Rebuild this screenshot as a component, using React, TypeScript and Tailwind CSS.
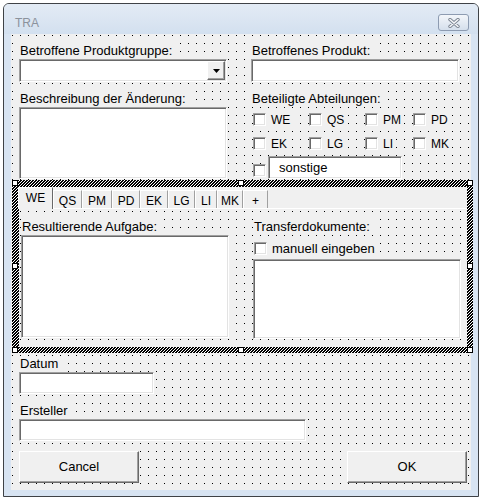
import React from 'react';

// recessed 3D edge used by text boxes, combo boxes and check boxes
const sunken =
  'bg-white border border-t-[#a0a0a0] border-l-[#a0a0a0] border-r-white border-b-white shadow-[inset_1px_1px_0_#696969,inset_-1px_-1px_0_#e3e3e3]';

// raised 3D edge used by buttons
const raised =
  'bg-[#f0f0f0] border border-t-white border-l-white border-r-[#696969] border-b-[#696969] shadow-[inset_-1px_-1px_0_#a0a0a0]';

// designer grid: 1px black dot every 8px
const dotGrid =
  'bg-[#f0f0f0] bg-[conic-gradient(at_1px_1px,transparent_270deg,#000_270deg)] bg-[length:8px_8px]';

const Label = ({ children, className = '' }: { children: React.ReactNode; className?: string }) => (
  <div className={`h-[16px] w-fit bg-[#f0f0f0] pl-[1px] pr-[3px] whitespace-nowrap ${className}`}>{children}</div>
);

const Box = ({ className = '' }: { className?: string }) => (
  <div className={`${sunken} w-[13px] h-[13px] shrink-0 ${className}`} />
);

const Check = ({ label, className = '' }: { label: string; className?: string }) => (
  <div className={`w-fit flex items-start h-[13px] bg-[#f0f0f0] ${className}`}>
    <Box />
    <span className="ml-[5px] mt-[1px] text-[12px] leading-[13px] pr-[3px]">{label}</span>
  </div>
);

const ComboBox = () => (
  <div className={`${sunken} h-[23px] flex justify-end items-start p-[1px]`}>
    <div className={`${raised} w-[18px] h-[19px] flex items-center justify-center`}>
      <svg width="7" height="4" viewBox="0 0 7 4">
        <path d="M0 0h7L3.5 4z" fill="#000" />
      </svg>
    </div>
  </div>
);

const Handle = ({ className }: { className: string }) => (
  <div className={`absolute w-[6px] h-[6px] bg-white border border-black ${className}`} />
);

const tabs = [
  { label: 'QS', width: 'w-[29px]' },
  { label: 'PM', width: 'w-[30px]' },
  { label: 'PD', width: 'w-[28px]' },
  { label: 'EK', width: 'w-[28px]' },
  { label: 'LG', width: 'w-[27px]' },
  { label: 'LI', width: 'w-[22px]' },
  { label: 'MK', width: 'w-[26px]' },
  { label: '+', width: 'w-[25px]' },
];

const departments = ['WE', 'QS', 'PM', 'PD', 'EK', 'LG', 'LI', 'MK'];

const CloseButton = () => (
  <div className="mt-[10px] w-[31px] h-[17px] rounded-[3px] border border-[#8d9bb1] bg-gradient-to-b from-[#f3f6fa] to-[#d5dfec] flex items-center justify-center">
    <svg width="12" height="10" viewBox="0 0 12 10">
      <path d="M2 1.5l8 7M10 1.5l-8 7" stroke="#7b8491" strokeWidth="3.4" strokeLinecap="round" />
      <path d="M2 1.5l8 7M10 1.5l-8 7" stroke="#f6f7f9" strokeWidth="1.6" strokeLinecap="round" />
    </svg>
  </div>
);

const MultiPage = () => (
  <div className="relative ml-[1px] w-[461px] h-[173px] pl-[7px] pt-[7px] pr-[6px] pb-[6px] bg-[repeating-linear-gradient(135deg,#000_0_1.4px,#fff_1.4px_2.12px)]">
    <div className="h-full flex flex-col bg-[#f0f0f0]">
      {/* tab strip */}
      <div className="h-[21px] flex items-start text-[12px] leading-[16px]">
        <div className="relative z-10 -ml-[1px] w-[35px] h-[22px] bg-[#f0f0f0] border-t border-l border-r border-t-white border-l-white border-r-[#696969] pt-[2px] text-center">
          WE
        </div>
        {tabs.map((t) => (
          <div
            key={t.label}
            className={`${t.width} mt-[3px] h-[18px] border-t border-l border-r border-t-white border-l-white border-r-[#a0a0a0] pt-[2px] text-center`}
          >
            {t.label}
          </div>
        ))}
      </div>
      {/* page */}
      <div className={`flex-1 border-t border-white ${dotGrid} bg-[position:1px_2px]`}>
        <div className="pl-[2px] grid grid-cols-[208px_208px] gap-x-[24px] items-start">
          <div className="flex flex-col">
            <Label className="mt-[10px]">Resultierende Aufgabe:</Label>
            <div className={`${sunken} h-[103px]`} />
          </div>
          <div className="flex flex-col">
            <Label className="mt-[10px]">Transferdokumente:</Label>
            <div className="w-fit mt-[7px] ml-[1px] flex items-start h-[13px] bg-[#f0f0f0]">
              <Box />
              <span className="ml-[5px] -mt-[1px] leading-[16px] pr-[3px]">manuell eingeben</span>
            </div>
            <div className={`${sunken} mt-[4px] h-[80px]`} />
          </div>
        </div>
      </div>
    </div>
    <Handle className="left-0 top-0" />
    <Handle className="left-[226px] top-0" />
    <Handle className="right-0 top-0" />
    <Handle className="left-0 top-[83px]" />
    <Handle className="right-0 top-[83px]" />
    <Handle className="left-0 bottom-0" />
    <Handle className="left-[226px] bottom-0" />
    <Handle className="right-0 bottom-0" />
  </div>
);

export default function App() {
  return (
    <div className="w-[481px] h-[501px] bg-white pl-[3px] pt-[3px] font-['Liberation_Sans',Arial,sans-serif] text-[13px] leading-[16px] text-black">
      <div className="w-[476px] h-[494px] rounded-t-[6px] border border-[#3f4246] bg-[#d8e4f2] flex flex-col">
        {/* title bar */}
        <div className="h-[30px] shrink-0 rounded-t-[5px] bg-gradient-to-b from-[#e3ebf5] to-[#d3e0ef] flex items-start justify-between pl-[11px] pr-[9px]">
          <span className="mt-[11px] text-[12px] leading-[16px] text-[#8b929c]">TRA</span>
          <CloseButton />
        </div>

        {/* form client area */}
        <div className={`ml-[7px] w-[460px] h-[456px] ${dotGrid} bg-[position:1px_1px] flex flex-col`}>
          <div className="h-[146px] shrink-0 pl-[8px] grid grid-cols-[208px_208px] gap-x-[24px] items-start">
            <div className="flex flex-col">
              <Label className="mt-[9px]">Betroffene Produktgruppe:</Label>
              <ComboBox />
              <Label className="mt-[9px]">Beschreibung der Änderung:</Label>
              <div className={`${sunken} h-[72px]`} />
            </div>
            <div className="flex flex-col">
              <Label className="mt-[9px]">Betroffenes Produkt:</Label>
              <div className={`${sunken} h-[23px]`} />
              <Label className="mt-[9px]">Beteiligte Abteilungen:</Label>
              <div className="mt-[6px] ml-[2px] grid grid-cols-[56px_56px_48px_auto] gap-y-[11px]">
                {departments.map((d) => (
                  <Check key={d} label={d} />
                ))}
              </div>
              <div className="mt-[6px] ml-[2px] flex items-start">
                <Box className="mt-[8px]" />
                <div className={`${sunken} ml-[2px] w-[134px] h-[23px] pl-[10px] flex items-center`}>sonstige</div>
              </div>
            </div>
          </div>

          <MultiPage />

          <div className="pl-[8px] flex flex-col">
            <Label className="mt-[3px]">Datum</Label>
            <div className={`${sunken} w-[135px] h-[22px]`} />
            <Label className="mt-[9px]">Ersteller</Label>
            <div className={`${sunken} w-[287px] h-[22px]`} />
            <div className="mt-[10px] w-[448px] flex justify-between">
              <button className={`${raised} w-[120px] h-[32px] text-center`}>Cancel</button>
              <button className={`${raised} w-[120px] h-[32px] text-center`}>OK</button>
            </div>
          </div>
        </div>
      </div>
    </div>
  );
}
